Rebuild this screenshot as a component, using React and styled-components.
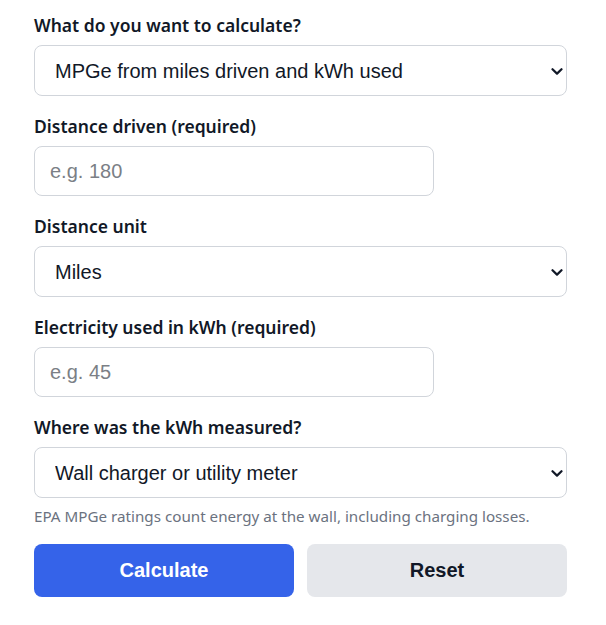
import React, { useState } from "react";
import styled, { createGlobalStyle } from "styled-components";

const GlobalStyle = createGlobalStyle`
    body {
        margin: 0;
        background: #ffffff;
        font-family: "Noto Sans", "Liberation Sans", sans-serif;
        color: #111827;
    }
`;

// 네이티브 화살표 대신 그리는 셰브론
const Chevron = () => (
    <ChevronIcon viewBox="0 0 12 7" aria-hidden="true">
        <path d="M1.5 1.2 L6 5.6 L10.5 1.2" fill="none" stroke="#111827" strokeWidth="2.2"
              strokeLinecap="round" strokeLinejoin="round"/>
    </ChevronIcon>
);

const SelectBox = ({id, value, onChange, children}) => (
    <SelectWrap>
        <Select id={id} value={value} onChange={onChange}>
            {children}
        </Select>
        <Chevron/>
    </SelectWrap>
);

const App = () => {
    const [mode, setMode] = useState("miles-kwh");
    const [distance, setDistance] = useState("");
    const [unit, setUnit] = useState("miles");
    const [kwh, setKwh] = useState("");
    const [source, setSource] = useState("wall");

    const handleReset = () => {
        setMode("miles-kwh");
        setDistance("");
        setUnit("miles");
        setKwh("");
        setSource("wall");
    };

    return (
        <>
            <GlobalStyle/>
            <Form onSubmit={(e) => e.preventDefault()}>
                <Field>
                    <Label htmlFor="mode">What do you want to calculate?</Label>
                    <SelectBox id="mode" value={mode} onChange={(e) => setMode(e.target.value)}>
                        <option value="miles-kwh">MPGe from miles driven and kWh used</option>
                        <option value="kwh-100">MPGe from kWh per 100 miles</option>
                        <option value="mi-kwh">MPGe from miles per kWh</option>
                    </SelectBox>
                </Field>

                <Field>
                    <Label htmlFor="distance">Distance driven (required)</Label>
                    <Input
                        id="distance"
                        type="text"
                        placeholder="e.g. 180"
                        value={distance}
                        onChange={(e) => setDistance(e.target.value)}
                    />
                </Field>

                <Field>
                    <Label htmlFor="unit">Distance unit</Label>
                    <SelectBox id="unit" value={unit} onChange={(e) => setUnit(e.target.value)}>
                        <option value="miles">Miles</option>
                        <option value="km">Kilometers</option>
                    </SelectBox>
                </Field>

                <Field>
                    <Label htmlFor="kwh">Electricity used in kWh (required)</Label>
                    <Input
                        id="kwh"
                        type="text"
                        placeholder="e.g. 45"
                        value={kwh}
                        onChange={(e) => setKwh(e.target.value)}
                    />
                </Field>

                <Field>
                    <Label htmlFor="source">Where was the kWh measured?</Label>
                    <SelectBox id="source" value={source} onChange={(e) => setSource(e.target.value)}>
                        <option value="wall">Wall charger or utility meter</option>
                        <option value="car">Car dashboard or app</option>
                    </SelectBox>
                    <Hint>EPA MPGe ratings count energy at the wall, including charging losses.</Hint>
                </Field>

                <Buttons>
                    <Button type="submit" $primary>Calculate</Button>
                    <Button type="button" onClick={handleReset}>Reset</Button>
                </Buttons>
            </Form>
        </>
    );
};

export default App;

const Form = styled.form`
    display: flex;
    flex-direction: column;
    max-width: 533px;
    padding: 13px 34px 20px;
`;

const Field = styled.div`
    display: flex;
    flex-direction: column;
    gap: 8px;
    margin-bottom: 18px;
`;

const Label = styled.label`
    font-family: "Noto Sans", sans-serif;
    font-size: 17.5px;
    font-weight: 600;
    line-height: 24px;
    color: #111827;
`;

const SelectWrap = styled.div`
    position: relative;
    display: flex;
`;

const Select = styled.select`
    flex: 1;
    height: 51px;
    padding: 0 36px 0 20px;
    border: 1px solid #d1d5db;
    border-radius: 8px;
    background: #ffffff;
    font-family: "Liberation Sans", Arial, sans-serif;
    font-size: 20px;
    color: #111827;
    appearance: none;
`;

const ChevronIcon = styled.svg`
    position: absolute;
    right: 4px;
    top: 50%;
    width: 12px;
    height: 7px;
    margin-top: -3px;
    pointer-events: none;
`;

const Input = styled.input`
    box-sizing: border-box;
    width: 400px;
    height: 50px;
    padding: 0 15px;
    border: 1px solid #d1d5db;
    border-radius: 8px;
    background: #ffffff;
    font-family: "Liberation Sans", Arial, sans-serif;
    font-size: 20px;
    color: #111827;

    &::placeholder {
        color: #7b7f86;
    }
`;

const Hint = styled.p`
    margin: 0;
    font-family: "Noto Sans", sans-serif;
    font-size: 15.2px;
    line-height: 20px;
    color: #6b7280;
`;

const Buttons = styled.div`
    display: grid;
    grid-template-columns: 1fr 1fr;
    gap: 13px;
`;

const Button = styled.button`
    height: 53px;
    border: none;
    border-radius: 8px;
    background: ${(p) => (p.$primary ? "#3563e9" : "#e5e7eb")};
    color: ${(p) => (p.$primary ? "#ffffff" : "#111827")};
    font-family: "Liberation Sans", Arial, sans-serif;
    font-size: 20px;
    font-weight: 700;
    cursor: pointer;
`;
